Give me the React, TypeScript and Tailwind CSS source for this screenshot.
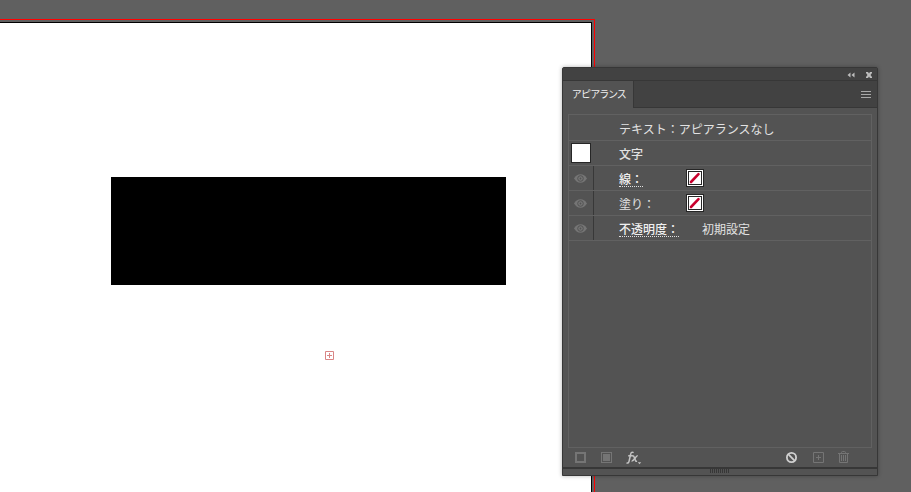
import type { ReactNode } from "react";

const jpFont = "font-['Noto_Sans_CJK_JP','Liberation_Sans',sans-serif]";

function EyeIcon() {
  return (
    <svg width="13" height="9" viewBox="0 0 13 9" aria-hidden="true">
      <path d="M0 4.5C1.8 1.7 3.8 0.3 6.5 0.3S11.2 1.7 13 4.5C11.2 7.3 9.2 8.7 6.5 8.7S1.8 7.3 0 4.5Z" fill="#757575" />
      <circle cx="6.5" cy="4.5" r="2.8" fill="none" stroke="#535353" strokeWidth="1" />
      <circle cx="6.5" cy="4.5" r="0.9" fill="#535353" />
    </svg>
  );
}

function NoneSwatch({ label }: { label: string }) {
  return (
    <button type="button" aria-label={label} className="block size-[18px] shrink-0">
      <svg width="18" height="18" viewBox="0 0 18 18" aria-hidden="true">
        <rect width="18" height="18" fill="#262626" />
        <rect x="1" y="1" width="16" height="16" fill="#fff" />
        <rect x="2" y="2" width="14" height="14" fill="#262626" />
        <rect x="3" y="3" width="12" height="12" fill="#fff" />
        <path d="M5 13L12.5 5.2" stroke="#c8002d" strokeWidth="2.6" strokeLinecap="round" />
      </svg>
    </button>
  );
}

type RowProps = {
  name: string;
  link?: boolean;
  children?: ReactNode;
};

function AttributeRow({ name, link, children }: RowProps) {
  return (
    <li className="flex h-[25px] items-center border-b border-[#616161]">
      <button
        type="button"
        aria-label={`${name} 表示`}
        className="flex h-full w-[25px] shrink-0 items-center justify-center border-r border-[#383838] pr-0.5"
      >
        <EyeIcon />
      </button>
      <div className="flex flex-1 items-center pl-[25px]">
        {link ? (
          <button type="button" className="mt-0.5 border-b border-dotted border-[#e0e0e0] font-medium leading-[14px] text-[#f0f0f0]">
            {`${name}\uFF1A`}
          </button>
        ) : (
          <span className="mt-0.5 leading-4">{`${name}\uFF1A`}</span>
        )}
        {children}
      </div>
    </li>
  );
}

function PanelFooter() {
  return (
    <div className="flex h-[19px] items-center justify-between pr-7 pl-[6px]">
      <div className="flex items-center">
        <button type="button" aria-label="新規線を追加" className="mr-[15px] ml-1.5">
          <svg width="11" height="11" viewBox="0 0 11 11" className="block">
            <rect x="1" y="1" width="9" height="9" fill="none" stroke="#757575" strokeWidth="2" />
          </svg>
        </button>
        <button type="button" aria-label="新規塗りを追加" className="mr-[14px]">
          <svg width="11" height="11" viewBox="0 0 11 11" className="block">
            <rect x="0.5" y="0.5" width="10" height="10" fill="none" stroke="#757575" />
            <rect x="2" y="2" width="7" height="7" fill="#757575" />
          </svg>
        </button>
        <button type="button" aria-label="新規効果を追加">
          <svg width="16" height="14" viewBox="0 0 16 14" className="block">
            <g fill="none" stroke="#c4c4c4" strokeWidth="1.5">
              <path d="M7.6 1.7C6.2 0.8 5 1.4 4.7 3L3.1 10.2C2.8 11.8 1.9 12.4 0.5 11.9" />
              <path d="M2.2 4.8H6.6" />
              <path d="M6.2 4.8C8.2 4.4 8 5.8 8.7 7.6S9.6 10.7 11 10" />
              <path d="M11.7 4.8C9.9 4.4 7.8 10.6 5.6 10" />
            </g>
            <path d="M11.8 11.2H15.2L13.5 13.2Z" fill="#c4c4c4" />
          </svg>
        </button>
      </div>
      <div className="flex items-center">
        <button type="button" aria-label="アピアランスを消去" className="mr-4">
          <svg width="11" height="11" viewBox="0 0 11 11" className="block">
            <g fill="none" stroke="#d0d0d0" strokeWidth="1.8">
              <circle cx="5.5" cy="5.5" r="4.6" />
              <path d="M2.2 2.2L8.8 8.8" />
            </g>
          </svg>
        </button>
        <button type="button" aria-label="選択した項目を複製" className="mr-[14px]">
          <svg width="11" height="11" viewBox="0 0 11 11" className="block">
            <path d="M0.5 0.5H10.5V10.5H0.5ZM5.5 3V8M3 5.5H8" fill="none" stroke="#757575" />
          </svg>
        </button>
        <button type="button" aria-label="選択した項目を削除">
          <svg width="11" height="13" viewBox="0 0 11 13" className="block">
            <path
              d="M0 2.5H11M3.5 2.5V1.5Q3.5 0.5 4.5 0.5H6.5Q7.5 0.5 7.5 1.5V2.5M1.5 2.5V11.5H9.5V2.5M3.5 4V10M5.5 4V10M7.5 4V10"
              fill="none"
              stroke="#757575"
            />
          </svg>
        </button>
      </div>
    </div>
  );
}

function AppearancePanel() {
  return (
    <section
      aria-label="アピアランス"
      className="absolute top-[67px] left-[562px] w-[316px] rounded-t-[2px] border border-[#373737] bg-[#535353] text-xs text-[#e2e2e2] shadow-[0_0_4px_rgba(0,0,0,0.3)]"
    >
      <div className="flex h-[13px] items-center justify-end gap-[11px] border-b border-[#373737] bg-[#424242] pr-[5px]">
        <button type="button" aria-label="パネルを折りたたむ">
          <svg width="8" height="6" viewBox="0 0 8 6" className="mt-px block">
            <path d="M3.5 0.5V5.5L0.5 3ZM7.5 0.5V5.5L4.5 3Z" fill="#bdbdbd" />
          </svg>
        </button>
        <button type="button" aria-label="閉じる">
          <svg width="6" height="6" viewBox="0 0 6 6" className="mt-px block">
            <path d="M0 0H2L3 1.5L4 0H6V1L4.5 3L6 5V6H4L3 4.5L2 6H0V5L1.5 3L0 1Z" fill="#bdbdbd" />
          </svg>
        </button>
      </div>

      <div className="flex h-[27px] justify-between bg-[#424242]">
        <button
          type="button"
          className="flex w-[71px] items-center border-r border-[#373737] bg-[#535353] pb-0.5 pl-[9px] text-[10px] leading-4 whitespace-nowrap text-[#f0f0f0] [font-feature-settings:'palt']"
        >
          アピアランス
        </button>
        <div className="flex flex-1 items-center justify-end border-b border-[#373737] pr-1.5">
          <button type="button" aria-label="パネルメニュー">
            <svg width="10" height="7" viewBox="0 0 10 7" className="block">
              <path d="M0 0.5H10M0 3.5H10M0 6.5H10" stroke="#a8a8a8" />
            </svg>
          </button>
        </div>
      </div>

      <ul className="mx-[5px] mt-[6px] h-[334px] border border-[#616161]">
        <li className="flex h-[26px] items-center border-b border-[#616161] pt-0.5 pl-[50px]">{"テキスト\uFF1Aアピアランスなし"}</li>
        <li className="flex h-[25px] items-center border-b border-[#616161] pl-[2px]">
          <button type="button" aria-label="文字 サムネール" className="size-5 shrink-0 border border-[#262626] bg-white" />
          <span className="mt-0.5 pl-7 font-medium">文字</span>
        </li>
        <AttributeRow name="線" link>
          <span className="ml-[43px]">
            <NoneSwatch label="線 なし" />
          </span>
        </AttributeRow>
        <AttributeRow name="塗り">
          <span className="ml-[31px]">
            <NoneSwatch label="塗り なし" />
          </span>
        </AttributeRow>
        <AttributeRow name="不透明度" link>
          <span className="mt-0.5 ml-[23px] leading-4">初期設定</span>
        </AttributeRow>
      </ul>

      <PanelFooter />

      <div className="flex h-2 justify-center border-t-2 border-[#373737]">
        <svg width="20" height="4" viewBox="0 0 20 4" aria-hidden="true">
          <path d="M0.5 0V4M2.5 0V4M4.5 0V4M6.5 0V4M8.5 0V4M10.5 0V4M12.5 0V4M14.5 0V4M16.5 0V4M18.5 0V4" stroke="#373737" />
        </svg>
      </div>
    </section>
  );
}

export default function App() {
  return (
    <main className={`relative h-screen overflow-hidden bg-[#606060] ${jpFont}`}>
      {/* bleed guide and artboard */}
      <div className="absolute top-[19px] bottom-0 left-0 w-[595px] border-t border-r border-[#ff0000]" />
      <div className="absolute top-[22px] bottom-0 left-0 w-[592px] border-t border-r border-black bg-white" />
      <div className="absolute top-[177px] left-[111px] h-[108px] w-[395px] bg-black" />
      <svg width="9" height="9" viewBox="0 0 9 9" className="absolute top-[351px] left-[325px]" aria-hidden="true">
        <path d="M0.5 0.5H8.5V8.5H0.5ZM4.5 2V7M2 4.5H7" fill="none" stroke="#d98585" />
      </svg>
      <AppearancePanel />
    </main>
  );
}
